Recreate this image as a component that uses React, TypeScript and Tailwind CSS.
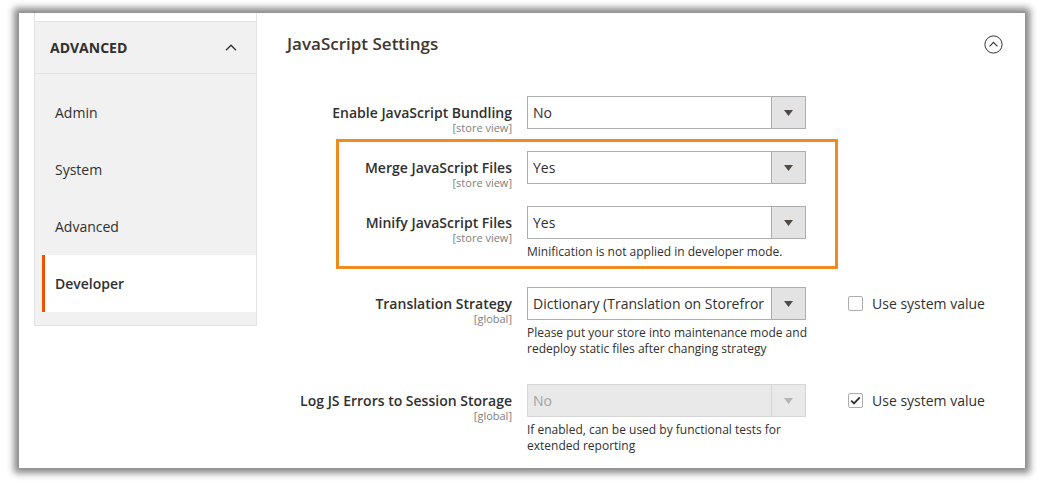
import type { ReactNode } from 'react';

const NAV = [
  { label: 'Admin', active: false },
  { label: 'System', active: false },
  { label: 'Advanced', active: false },
  { label: 'Developer', active: true },
];

function Arrow({ disabled }: { disabled?: boolean }) {
  return (
    <svg width="9" height="6" viewBox="0 0 9 6">
      <path d="M0 0h9L4.5 6z" fill={disabled ? '#b5b5b5' : '#514943'} />
    </svg>
  );
}

function Select({ value, disabled }: { value: string; disabled?: boolean }) {
  return (
    <div
      className={`flex h-[33px] w-[279px] border ${
        disabled ? 'border-[#d6d6d6] bg-[#e9e9e9] text-[#a3a3a3]' : 'border-[#adadad] bg-white text-[#303030]'
      }`}
    >
      <div className="flex-1 overflow-hidden whitespace-nowrap pl-[5px] text-[14px] leading-[31px]">{value}</div>
      <div
        className={`flex w-[34px] items-center justify-center border-l ${
          disabled ? 'border-[#d6d6d6] bg-[#e9e9e9]' : 'border-[#adadad] bg-[#e3e3e3]'
        }`}
      >
        <Arrow disabled={disabled} />
      </div>
    </div>
  );
}

function Checkbox({ checked }: { checked?: boolean }) {
  return (
    <div className="ml-[42px] flex h-[33px] items-center">
      <div className="flex h-[15px] w-[15px] items-center justify-center rounded-[2px] border border-[#adadad] bg-white">
        {checked && (
          <svg width="11" height="9" viewBox="0 0 11 9">
            <path d="M1.2 4.6l2.8 2.8L9.8 1.4" fill="none" stroke="#303030" strokeWidth="1.8" />
          </svg>
        )}
      </div>
      <span className="ml-[9px] text-[14px] text-[#303030]">Use system value</span>
    </div>
  );
}

interface RowProps {
  label: string;
  scope: string;
  value: string;
  note?: ReactNode;
  disabled?: boolean;
  system?: 'checked' | 'unchecked';
  className?: string;
}

function Row({ label, scope, value, note, disabled, system, className = '' }: RowProps) {
  return (
    <div className={`flex items-start ${className}`}>
      <div className="h-[33px] w-[225px] shrink-0 pt-[8px] text-right">
        <div className="whitespace-nowrap text-[14px] font-semibold leading-[18px] text-[#303030]">{label}</div>
        <div className="text-[11px] leading-[12px] text-[#808080]">{scope}</div>
      </div>
      <div className="ml-[15px] w-[279px]">
        <Select value={value} disabled={disabled} />
        {note && <div className="mt-[5px] whitespace-nowrap text-[12px] leading-[16px] text-[#303030]">{note}</div>}
      </div>
      {system && <Checkbox checked={system === 'checked'} />}
    </div>
  );
}

export default function App() {
  return (
    <div className="h-[483px] w-[1043px] bg-white pl-[19px] pt-[13px] font-['Open_Sans',sans-serif]">
      <div className="flex h-[455px] w-[1006px] overflow-hidden bg-white shadow-[0_0_7px_5px_rgba(0,0,0,0.48)]">
        {/* sidebar */}
        <div className="ml-[15px] w-[223px] shrink-0">
          <div className="h-[8px] border-x border-[#e3e3e3] bg-white" />
          <div className="border border-[#e3e3e3] bg-[#f1f1f1]">
            <div className="flex h-[52px] items-center justify-between border-b border-[#e3e3e3] pl-[15px] pr-[19px]">
              <span className="text-[14px] font-bold text-[#303030]">ADVANCED</span>
              <svg width="12" height="7" viewBox="0 0 12 7">
                <path d="M1 6.2L6 1.2l5 5" fill="none" stroke="#303030" strokeWidth="1.3" />
              </svg>
            </div>
            <div className="ml-[7px] pb-[13px] pt-[10px]">
              {NAV.map((item) => (
                <div
                  key={item.label}
                  className={`flex h-[57px] items-center text-[14px] text-[#303030] ${
                    item.active
                      ? 'border-l-[3px] border-[#eb5202] bg-white pl-[10px] font-semibold'
                      : 'pl-[13px]'
                  }`}
                >
                  {item.label}
                </div>
              ))}
            </div>
          </div>
        </div>

        {/* main */}
        <div className="ml-[30px] flex-1">
          <div className="mr-[22px] mt-[19px] flex h-[24px] items-center justify-between">
            <h2 className="text-[17px] font-semibold leading-[24px] text-[#41362f]">JavaScript Settings</h2>
            <svg width="19" height="19" viewBox="0 0 19 19">
              <circle cx="9.5" cy="9.5" r="8.6" fill="none" stroke="#303030" strokeWidth="1" />
              <path d="M5.6 11.3L9.5 7.4l3.9 3.9" fill="none" stroke="#303030" strokeWidth="1.1" />
            </svg>
          </div>

          <div className="mt-[40px]">
            <Row label="Enable JavaScript Bundling" scope="[store view]" value="No" className="mb-[22px]" />

            <div className="relative mb-[27px]">
              <div className="pointer-events-none absolute left-[49px] top-[-12px] h-[130px] w-[502px] border-[3px] border-[#ef8a1f]" />
              <Row label="Merge JavaScript Files" scope="[store view]" value="Yes" className="mb-[22px]" />
              <Row
                label="Minify JavaScript Files"
                scope="[store view]"
                value="Yes"
                note="Minification is not applied in developer mode."
              />
            </div>

            <Row
              label="Translation Strategy"
              scope="[global]"
              value="Dictionary (Translation on Storefror"
              system="unchecked"
              className="mb-[27px]"
              note={
                <>
                  Please put your store into maintenance mode and
                  <br />
                  redeploy static files after changing strategy
                </>
              }
            />

            <Row
              label="Log JS Errors to Session Storage"
              scope="[global]"
              value="No"
              disabled
              system="checked"
              note={
                <>
                  If enabled, can be used by functional tests for
                  <br />
                  extended reporting
                </>
              }
            />
          </div>
        </div>
      </div>
    </div>
  );
}
